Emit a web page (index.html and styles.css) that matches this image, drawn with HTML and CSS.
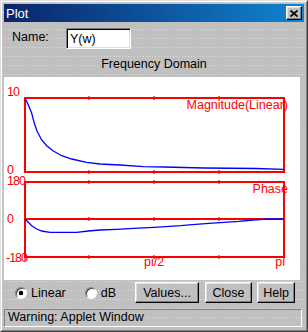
FILE: index.html
```html
<!DOCTYPE html>
<html lang="en">
<head>
    <meta charset="UTF-8">
    <title>Plot</title>
    <link rel="stylesheet" href="styles.css">
</head>
<body>
    <div class="window">
        <div class="frame">
            <div class="titlebar">
                <span class="title">Plot</span>
                <button class="close-btn" aria-label="Close">
                    <svg width="8" height="7" viewBox="0 0 8 7"><path d="M0.5 0.5L7.5 6.5M7.5 0.5L0.5 6.5"/></svg>
                </button>
            </div>

            <div class="name-row">
                <label for="name">Name:</label>
                <input id="name" class="field" type="text" value="Y(w)">
            </div>

            <div class="heading">Frequency Domain</div>

            <!-- magnitude and phase plots -->
            <div class="plot-area">
                <svg class="plot" width="296" height="203" viewBox="0 0 296 203">
                    <g class="axes">
                        <rect x="21" y="21" width="259" height="74"/>
                        <rect x="21" y="105" width="259" height="75"/>
                        <path d="M21 142H280"/>
                    </g>
                    <g class="ticks">
                        <path d="M85 19v4M150 19v4M215 19v4M85 93v4M150 93v4M215 93v4"/>
                        <path d="M85 103v4M150 103v4M215 103v4M85 140v4M150 140v4M215 140v4"/>
                        <path d="M21 178v6M85 178v4M150 178v4M215 178v4M280 178v4"/>
                    </g>
                    <text class="label num" x="3" y="19">10</text>
                    <text class="label num" x="3" y="97">0</text>
                    <text class="label num" x="3" y="108">180</text>
                    <text class="label num" x="3" y="146">0</text>
                    <text class="label num" x="2" y="185">-180</text>
                    <text class="label" x="140" y="189">pi/2</text>
                    <text class="label" x="281" y="189" text-anchor="end">pi</text>
                    <text class="label" x="284" y="32" text-anchor="end">Magnitude(Linear)</text>
                    <text class="label" x="284" y="116" text-anchor="end">Phase</text>
                    <polyline class="curve" points="21,21 22,23 24.3,28 27.7,36.3 30.3,46.3 33.3,54.7 37.7,63 42.7,68.7 49.3,74 57.7,78.7 67.7,82 82.7,85.3 96,87 116,88 139.3,89.7 160,90 200,91 251.7,91.5 280,92.3"/>
                    <polyline class="curve" points="21,142 24.3,145.3 27.7,148.7 32.7,152 37.7,154 46,155.3 72.7,155.3 84.3,154 96,153 112.7,152.3 129.3,151.3 150,150.3 161.7,149.7 176.7,148.7 191.7,147.3 205,146.3 220,145.3 235,144.3 249.3,143 263.3,142 280,142"/>
                </svg>
            </div>

            <div class="controls">
                <label class="radio"><input type="radio" name="scale" checked>Linear</label>
                <label class="radio"><input type="radio" name="scale">dB</label>
                <div class="buttons">
                    <button class="btn btn-values">Values...</button>
                    <button class="btn btn-close">Close</button>
                    <button class="btn btn-help">Help</button>
                </div>
            </div>

            <div class="status">Warning: Applet Window</div>
        </div>
    </div>
</body>
</html>
```

FILE: styles.css
```css
body {
    margin: 0;
    font-family: "Liberation Sans", Arial, sans-serif;
    font-size: 12.5px;
    color: #000;
}
.window {
    width: 308px;
    height: 332px;
    box-sizing: border-box;
    border: 1px solid;
    border-color: #dfdfdf #404040 #404040 #dfdfdf;
    background: #c0c0c0;
}
.frame {
    height: 100%;
    box-sizing: border-box;
    border: 1px solid;
    border-color: #fff #808080 #808080 #fff;
    padding: 2px;
    display: flex;
    flex-direction: column;
    background: conic-gradient(from 270deg at 1px 1px, #dcdcdc 90deg, #c0c0c0 0) 0 0 / 3px 9px;
}
.titlebar {
    flex: none;
    height: 18px;
    display: flex;
    align-items: center;
    justify-content: space-between;
    padding: 0 2px;
    background: linear-gradient(90deg, #0a246a, #1084d0);
    color: #fff;
    font-size: 13px;
    line-height: 15px;
}
.close-btn {
    width: 16px;
    height: 14px;
    padding: 0;
    display: flex;
    align-items: center;
    justify-content: center;
    background: #c0c0c0;
    border: 1px solid;
    border-color: #fff #000 #000 #fff;
    box-shadow: inset -1px -1px #808080, inset 1px 1px #dfdfdf;
}
.close-btn svg {
    display: block;
    stroke: #000;
    stroke-width: 1.7;
}
.name-row {
    flex: none;
    display: flex;
    align-items: flex-start;
    height: 21px;
    margin-top: 6px;
    padding-left: 8px;
}
.name-row label {
    width: 54px;
    margin-top: 2px;
    line-height: 14px;
}
.field {
    width: 65px;
    height: 21px;
    box-sizing: border-box;
    margin: 0;
    padding: 0 2px 0 3px;
    border: 1px solid;
    border-color: #808080 #fff #fff #808080;
    box-shadow: inset 1px 1px #000, inset -1px -1px #dfdfdf;
    background: #fff;
    font: inherit;
    color: #000;
    outline: none;
}
.heading {
    flex: none;
    height: 14px;
    padding-top: 8px;
    margin-bottom: 6px;
    line-height: 14px;
    text-align: center;
}
.plot-area {
    flex: none;
    height: 203px;
    margin-right: 4px;
    background: #fff;
}
.plot {
    display: block;
}
.axes {
    fill: none;
    stroke: #f00;
    stroke-width: 2;
}
.ticks {
    fill: none;
    stroke: #f00;
    stroke-width: 1.2;
}
.label {
    fill: #f00;
    font-family: "Liberation Sans", Arial, sans-serif;
    font-size: 12.5px;
}
.num {
    letter-spacing: -1px;
}
.curve {
    fill: none;
    stroke: #00f;
    stroke-width: 1.3;
}
.controls {
    flex: none;
    display: flex;
    align-items: center;
    height: 21px;
    padding: 2px 11px 0 11px;
}
.radio {
    display: flex;
    align-items: center;
    gap: 4px;
    margin-right: 19px;
    line-height: 14px;
}
.radio input {
    appearance: none;
    width: 12px;
    height: 12px;
    margin: 0;
    box-sizing: border-box;
    border-radius: 50%;
    border: 1px solid;
    border-color: #808080 #fff #fff #808080;
    box-shadow: inset 1px 1px #404040;
    background: #fff;
}
.radio input:checked {
    background: radial-gradient(circle, #000 0 2px, #fff 2.6px);
}
.buttons {
    margin-left: auto;
    display: flex;
}
.btn {
    height: 21px;
    padding: 0;
    font: inherit;
    line-height: 14px;
    color: #000;
    background: #c0c0c0;
    border: 1px solid;
    border-color: #fff #000 #000 #fff;
    box-shadow: inset -1px -1px #808080, inset 1px 1px #dfdfdf;
}
.btn-values { width: 64px; }
.btn-close { width: 47px; margin-left: 6px; }
.btn-help { width: 38px; margin-left: 5px; }
.status {
    flex: none;
    height: 18px;
    box-sizing: border-box;
    margin-top: 6px;
    margin-right: 2px;
    padding-left: 3px;
    border: 1px solid;
    border-color: #808080 #fff #fff #808080;
    line-height: 14px;
}
```
